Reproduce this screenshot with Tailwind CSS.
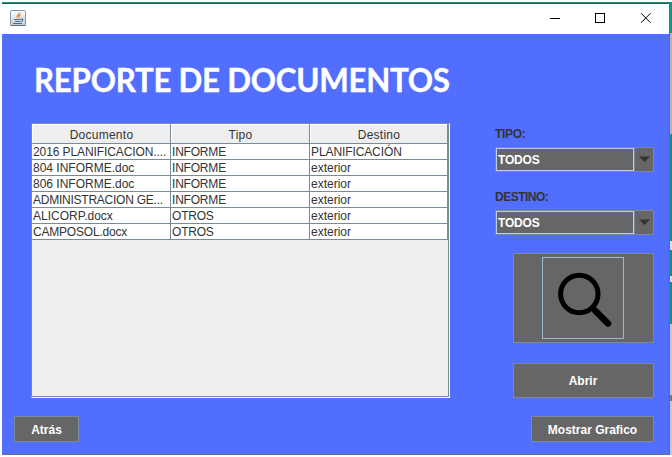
<!DOCTYPE html>
<html lang="es">
<head>
<meta charset="utf-8">
<title>Reporte de documentos</title>
<script src="https://cdn.jsdelivr.net/npm/@tailwindcss/browser@4"></script>
</head>
<body class="w-[672px] h-[457px] overflow-hidden bg-white font-['Liberation_Sans',Arial,sans-serif] text-[12px] text-[#333]">
<div class="flex h-[457px] pt-[2px] pl-[2px]">
  <div class="w-[668px] h-[453px] shrink-0 flex flex-col border-t border-t-[#26907f] border-r border-r-[#5f6a90] border-b border-b-[#6a6f85]">
    <header class="h-[31px] shrink-0 bg-white border-t border-t-[#0c6455] flex items-center pl-[8px]">
      <svg width="16" height="16" viewBox="0 0 16 16" class="-mt-[2px]">
        <defs><linearGradient id="g" x1="0" y1="0" x2="0" y2="1"><stop offset="0" stop-color="#fafbfc"/><stop offset="1" stop-color="#c3ced9"/></linearGradient></defs>
        <rect x=".5" y=".5" width="15" height="15" rx="1" fill="url(#g)" stroke="#8797a8"/>
        <path d="M.5 15.500h15" stroke="#5f6e7d"/>
        <path d="M9.500 2.500C10 4.500 6 5 7 7.500M10.800 4.500C8.500 5.500 8.500 6.500 9 8" fill="none" stroke="#e58a2d" stroke-width="1.300"/>
        <path d="M4 9.500h7M5 11.500h5.500M3 13.500h9M11 9c2.500-.5 2.500 1.700.3 2.300" fill="none" stroke="#4d6f8d" stroke-width="1.100"/>
      </svg>
      <svg width="101" height="10" viewBox="0 0 101 10" class="ml-auto mr-[18px] -mt-[2px]" fill="none" stroke="#000">
        <path d="M0 5.500h10"/><rect x="45.500" y=".5" width="9" height="9"/><path d="M91 .2l9.600 9.600M100.600 .2l-9.600 9.600"/>
      </svg>
    </header>
    <main class="flex-1 bg-[#526eff] flex flex-col">
      <h1 class="h-[89px] shrink-0 pl-[32px] pt-[26px] leading-[40px] text-[32px] font-bold text-white whitespace-nowrap font-[Lato,sans-serif]"><span class="inline-block origin-left scale-x-[.977] tracking-[-0.25px] [-webkit-text-stroke:0.4px_white]">REPORTE DE DOCUMENTOS</span></h1>
      <div class="flex h-[275px] shrink-0 pl-[29px]">
        <div class="w-[419px] h-[275px] bg-[#eee] border border-[#7a8a99] border-r-white border-b-white shrink-0">
          <div class="h-[273px] border-r border-b border-[#7a8a99]">
            <table class="w-[416px] table-fixed border-separate border-spacing-0 bg-white leading-[14px] [&_td]:h-[16px] [&_td]:p-0 [&_td]:pt-px [&_td]:pl-px [&_td]:border-r [&_td]:border-b [&_td]:border-[#7a8a99] [&_td]:whitespace-nowrap [&_td]:overflow-hidden [&_th]:h-[20px] [&_th]:p-0 [&_th]:pt-[3px] [&_th]:pl-px [&_th]:tracking-[.25px] [&_th]:font-normal [&_th]:bg-[#eee] [&_th]:border-r [&_th]:border-b [&_th]:border-[#7a8a99] [&_th]:shadow-[inset_1px_1px_0_white]">
              <colgroup><col class="w-[139px]"><col class="w-[139px]"><col class="w-[138px]"></colgroup>
              <thead><tr><th>Documento</th><th>Tipo</th><th>Destino</th></tr></thead>
              <tbody>
                <tr><td class="tracking-[-.1px]">2016 PLANIFICACION....</td><td class="tracking-[-.2px]">INFORME</td><td class="tracking-[-.1px]">PLANIFICACIÓN</td></tr>
                <tr><td>804 INFORME.doc</td><td class="tracking-[-.2px]">INFORME</td><td>exterior</td></tr>
                <tr><td>806 INFORME.doc</td><td class="tracking-[-.2px]">INFORME</td><td>exterior</td></tr>
                <tr><td class="tracking-[-.24px]">ADMINISTRACION GE...</td><td class="tracking-[-.2px]">INFORME</td><td>exterior</td></tr>
                <tr><td>ALICORP.docx</td><td class="tracking-[-.2px]">OTROS</td><td>exterior</td></tr>
                <tr><td class="tracking-[-.2px]">CAMPOSOL.docx</td><td class="tracking-[-.2px]">OTROS</td><td>exterior</td></tr>
              </tbody>
            </table>
          </div>
        </div>
        <div class="w-[159px] ml-[45px] flex flex-col font-bold shrink-0">
          <label class="h-[24px] pt-[4px] leading-[14px] tracking-[-.3px]">TIPO:</label>
          <div class="h-[25px] shrink-0 flex bg-[#666] border border-[#7a8a99] text-white tracking-[-.2px]">
            <div class="w-[138px] border border-[#b8cfe5] pl-px leading-[22px]">TODOS</div>
            <svg width="19" height="23" class="border-l border-[#7a8a99]"><path d="M4 8.500h11l-5.500 5.500z" fill="#333"/></svg>
          </div>
          <label class="h-[38px] pt-[18px] leading-[14px] tracking-[-.5px]">DESTINO:</label>
          <div class="h-[25px] shrink-0 flex bg-[#666] border border-[#7a8a99] text-white tracking-[-.2px]">
            <div class="w-[138px] border border-[#b8cfe5] pl-px leading-[22px]">TODOS</div>
            <svg width="19" height="23" class="border-l border-[#7a8a99]"><path d="M4 8.500h11l-5.500 5.500z" fill="#333"/></svg>
          </div>
          <button class="mt-[18px] ml-[18px] h-[90px] w-[141px] shrink-0 bg-[#666] border border-[#7a8a99] flex pl-[28px] items-center">
            <svg width="82" height="82" viewBox="0 0 82 82" fill="none" stroke="#000"><rect x=".5" y=".5" width="81" height="81" stroke="#a3b8c8"/><circle cx="37.300" cy="37" r="18.700" stroke-width="5"/><path d="M50.500 51l4 4" stroke-width="5"/><path d="M53.500 54l12.500 12.500" stroke-width="6.500" stroke-linecap="round"/></svg>
          </button>
          <button class="mt-[20px] ml-[18px] h-[35px] w-[141px] shrink-0 bg-[#666] border border-[#7a8a99] text-white pr-px">Abrir</button>
        </div>
      </div>
      <div class="flex justify-between pl-[12px] pr-[15px] pt-[18px] font-bold text-white">
        <button class="w-[65px] h-[26px] bg-[#666] border border-[#7a8a99] pt-px">Atrás</button>
        <button class="w-[123px] h-[26px] bg-[#666] border border-[#7a8a99] pt-px">Mostrar Grafico</button>
      </div>
    </main>
  </div>
  <div class="w-[2px] h-[453px] shrink-0 flex flex-col">
    <i class="h-[31px] bg-[#139682]"></i><i class="h-[101px] bg-[#b5b5b8]"></i><i class="h-[107px] bg-[#168b80]"></i><i class="h-[9px] bg-[#ddd]"></i><i class="h-[26px] bg-[#168b80]"></i><i class="h-[6px] bg-[#ddd]"></i><i class="h-[42px] bg-[#168b80]"></i><i class="h-[71px] bg-[#c8c8cc]"></i><i class="h-[6px] bg-[#777]"></i><i class="flex-1 bg-[#c8c8cc]"></i>
  </div>
</div>
</body>
</html>
